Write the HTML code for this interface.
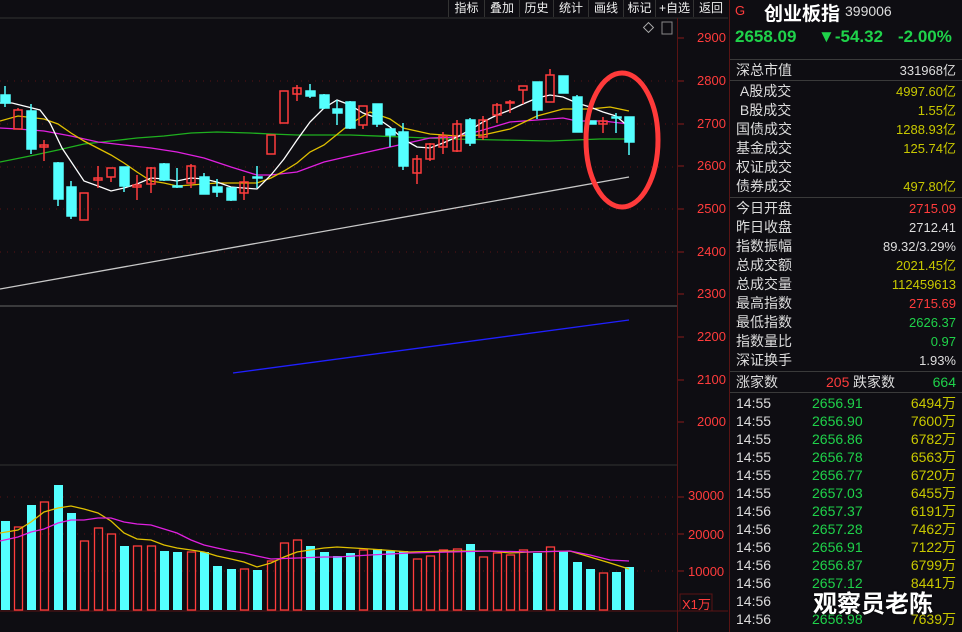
<!DOCTYPE html>
<html><head><meta charset="utf-8"><style>
*{margin:0;padding:0;box-sizing:border-box}
body{width:962px;height:632px;background:#0e0d12;overflow:hidden;position:relative;font-family:"Liberation Sans","Noto Sans CJK SC",sans-serif;color:#dcdcdc}
.tb{position:absolute;top:0;height:17px;font-size:12px;color:#eee;line-height:16px;text-align:center;border-left:1px solid #333}
.rp{position:absolute;left:729px;top:0;width:233px;height:632px;border-left:1px solid #5a1414}
.row{position:absolute;left:6px;right:6px;height:19px;font-size:14px;line-height:19px}
.row .v{position:absolute;right:0;top:0;font-size:13px}
.sep{position:absolute;left:0;right:0;height:1px;background:#3a3a3a}
.ax{position:absolute;left:697px;font-size:13px;color:#ff3c3c}
.tr{position:absolute;left:6px;right:6px;height:18px;font-size:14px;line-height:18px}
.tr span{position:absolute;top:0}
</style></head><body>
<div class="tb" style="left:448px;width:36px">指标</div>
<div class="tb" style="left:484px;width:35px">叠加</div>
<div class="tb" style="left:519px;width:34px">历史</div>
<div class="tb" style="left:553px;width:35px">统计</div>
<div class="tb" style="left:588px;width:35px">画线</div>
<div class="tb" style="left:623px;width:32px">标记</div>
<div class="tb" style="left:655px;width:38px">+自选</div>
<div class="tb" style="left:693px;width:35px">返回</div>
<svg width="730" height="632" style="position:absolute;left:0;top:0">
<line x1="0" y1="18" x2="728" y2="18" stroke="#333" />
<g stroke="#5a1414" stroke-dasharray="1,6" stroke-width="1">
<line x1="0" y1="81" x2="678" y2="81"/><line x1="0" y1="124" x2="678" y2="124"/><line x1="0" y1="167" x2="678" y2="167"/><line x1="0" y1="209" x2="678" y2="209"/><line x1="0" y1="252" x2="678" y2="252"/>
<line x1="0" y1="497" x2="678" y2="497"/><line x1="0" y1="534" x2="678" y2="534"/><line x1="0" y1="571" x2="678" y2="571"/>
</g>
<line x1="0" y1="306" x2="678" y2="306" stroke="#666"/>
<line x1="0" y1="465" x2="678" y2="465" stroke="#333"/>
<line x1="0" y1="611" x2="728" y2="611" stroke="#5a1414"/>
<line x1="677.5" y1="18" x2="677.5" y2="632" stroke="#5a1414"/>
<g stroke="#8a1a1a"><line x1="678" y1="38" x2="684" y2="38"/><line x1="678" y1="81" x2="684" y2="81"/><line x1="678" y1="124" x2="684" y2="124"/><line x1="678" y1="166" x2="684" y2="166"/><line x1="678" y1="209" x2="684" y2="209"/><line x1="678" y1="252" x2="684" y2="252"/><line x1="678" y1="294" x2="684" y2="294"/><line x1="678" y1="337" x2="684" y2="337"/><line x1="678" y1="380" x2="684" y2="380"/><line x1="678" y1="422" x2="684" y2="422"/><line x1="678" y1="497" x2="684" y2="497"/><line x1="678" y1="534" x2="684" y2="534"/><line x1="678" y1="571" x2="684" y2="571"/></g>
<rect x="645" y="24" width="7" height="7" fill="none" stroke="#aaa" transform="rotate(45 648.5 27.5)"/>
<rect x="662" y="22" width="10" height="12" fill="none" stroke="#888"/>
<rect x="680" y="594" width="32" height="17" fill="none" stroke="#5a1414"/>
<line x1="0" y1="289" x2="629" y2="177" stroke="#c8c8c8" stroke-width="1.3"/>
<line x1="233" y1="373" x2="629" y2="320" stroke="#2020ff" stroke-width="1.3"/>
<polyline fill="none" stroke="#1fb01f" stroke-width="1.3" points="0,162 30,156 58,150 84,144 111,141 137,138 164,136 191,133 217,132 250,133 271,134 297,135 324,135 350,135 403,137 450,139 500,140 550,141 600,139 629,139"/>
<polyline fill="none" stroke="#e020e0" stroke-width="1.3" points="0,128 18,129 44,131 71,136 98,142 124,145 151,148 177,152 204,158 231,167 257,175 271,175 297,172 324,162 350,156 390,147 430,138 457,137 483,130 510,122 537,120 563,118 577,121 603,121 629,124"/>
<polyline fill="none" stroke="#e0c000" stroke-width="1.3" points="0,121 18,116 44,119 58,124 71,133 84,141 111,155 124,163 137,172 151,181 164,183 177,186 191,185 217,183 257,183 271,178 284,171 297,163 310,152 324,145 350,124 370,112 390,119 403,128 430,134 457,136 483,135 510,129 537,116 563,109 590,109 610,107 629,111"/>
<polyline fill="none" stroke="#ffffff" stroke-width="1.3" points="0,103 12,103 40,110 50,123 62,148 84,181 98,186 111,191 124,188 137,184 151,178 164,179 177,181 191,178 204,179 217,182 231,187 257,189 271,175 284,159 297,140 310,122 324,108 337,100 350,105 363,113 377,118 390,127 403,139 417,147 430,148 443,143 457,137 470,130 483,122 497,115 510,110 523,104 537,98 550,95 563,97 577,103 590,107 603,112 616,116 629,127"/>
<g stroke-width="1.5">
<g stroke="#54ffff" fill="#54ffff">
<line x1="5" y1="86" x2="5" y2="107"/><rect x="1" y="95" width="9" height="8"/>
<line x1="31" y1="104" x2="31" y2="154"/><rect x="27" y="111" width="9" height="38"/>
<line x1="58" y1="162" x2="58" y2="206"/><rect x="54" y="163" width="9" height="36"/>
<line x1="71" y1="181" x2="71" y2="219"/><rect x="67" y="187" width="9" height="29"/>
<line x1="124" y1="167" x2="124" y2="192"/><rect x="120" y="167" width="9" height="19"/>
<line x1="164" y1="163" x2="164" y2="181"/><rect x="160" y="164" width="9" height="16"/>
<line x1="177" y1="168" x2="177" y2="188"/><rect x="173" y="186" width="9" height="1"/>
<line x1="204" y1="173" x2="204" y2="194"/><rect x="200" y="177" width="9" height="17"/>
<line x1="217" y1="179" x2="217" y2="197"/><rect x="213" y="187" width="9" height="5"/>
<line x1="231" y1="188" x2="231" y2="201"/><rect x="227" y="188" width="9" height="12"/>
<line x1="257" y1="166" x2="257" y2="188"/><rect x="253" y="177" width="9" height="1"/>
<line x1="310" y1="84" x2="310" y2="98"/><rect x="306" y="91" width="9" height="5"/>
<line x1="324" y1="94" x2="324" y2="109"/><rect x="320" y="95" width="9" height="13"/>
<line x1="337" y1="100" x2="337" y2="125"/><rect x="333" y="109" width="9" height="4"/>
<line x1="350" y1="101" x2="350" y2="129"/><rect x="346" y="102" width="9" height="26"/>
<line x1="377" y1="104" x2="377" y2="127"/><rect x="373" y="104" width="9" height="20"/>
<line x1="390" y1="129" x2="390" y2="147"/><rect x="386" y="129" width="9" height="6"/>
<line x1="403" y1="123" x2="403" y2="170"/><rect x="399" y="132" width="9" height="34"/>
<line x1="470" y1="118" x2="470" y2="146"/><rect x="466" y="120" width="9" height="23"/>
<line x1="537" y1="82" x2="537" y2="119"/><rect x="533" y="82" width="9" height="28"/>
<rect x="559" y="76" width="9" height="17"/>
<line x1="577" y1="95" x2="577" y2="132"/><rect x="573" y="97" width="9" height="35"/>
<rect x="588" y="121" width="8" height="3"/>
<line x1="616" y1="113" x2="616" y2="133"/><rect x="612" y="117" width="9" height="1"/>
<line x1="629" y1="117" x2="629" y2="155"/><rect x="625" y="117" width="9" height="25"/>
</g>
<g stroke="#ff3c3c" fill="none">
<line x1="18" y1="108" x2="18" y2="110"/><rect x="14" y="110" width="8" height="19"/>
<line x1="44" y1="140" x2="44" y2="161"/><rect x="40" y="145" width="8" height="2"/>
<rect x="80" y="193" width="8" height="27"/>
<line x1="98" y1="166" x2="98" y2="188"/><rect x="94" y="178" width="8" height="2"/>
<line x1="111" y1="177" x2="111" y2="182"/><rect x="107" y="168" width="8" height="9"/>
<line x1="137" y1="175" x2="137" y2="200"/><rect x="133" y="185" width="8" height="2"/>
<line x1="151" y1="167" x2="151" y2="193"/><rect x="147" y="168" width="8" height="16"/>
<line x1="191" y1="164" x2="191" y2="188"/><rect x="187" y="166" width="8" height="17"/>
<line x1="244" y1="176" x2="244" y2="200"/><rect x="240" y="182" width="8" height="11"/>
<rect x="267" y="135" width="8" height="19"/>
<rect x="280" y="91" width="8" height="32"/>
<line x1="297" y1="85" x2="297" y2="101"/><rect x="293" y="88" width="8" height="6"/>
<line x1="363" y1="125" x2="363" y2="129"/><rect x="359" y="106" width="8" height="19"/>
<line x1="417" y1="155" x2="417" y2="184"/><rect x="413" y="159" width="8" height="14"/>
<line x1="430" y1="143" x2="430" y2="161"/><rect x="426" y="144" width="8" height="15"/>
<line x1="443" y1="132" x2="443" y2="154"/><rect x="439" y="136" width="8" height="11"/>
<line x1="457" y1="120" x2="457" y2="152"/><rect x="453" y="124" width="8" height="27"/>
<line x1="483" y1="116" x2="483" y2="140"/><rect x="479" y="120" width="8" height="17"/>
<line x1="497" y1="103" x2="497" y2="123"/><rect x="493" y="105" width="8" height="10"/>
<line x1="510" y1="100" x2="510" y2="113"/><rect x="506" y="102" width="8" height="1"/>
<line x1="523" y1="90" x2="523" y2="104"/><rect x="519" y="86" width="8" height="4"/>
<line x1="550" y1="69" x2="550" y2="75"/><rect x="546" y="75" width="8" height="27"/>
<line x1="603" y1="117" x2="603" y2="133"/><rect x="599" y="121" width="8" height="3"/>
</g>
</g>
<ellipse cx="622" cy="140" rx="36" ry="67" fill="none" stroke="#ff3a3a" stroke-width="5"/>
<g fill="#54ffff">
<rect x="1" y="521" width="9" height="89"/><rect x="27" y="505" width="9" height="105"/><rect x="54" y="485" width="9" height="125"/><rect x="67" y="513" width="9" height="97"/><rect x="120" y="546" width="9" height="64"/><rect x="160" y="551" width="9" height="59"/><rect x="173" y="552" width="9" height="58"/><rect x="200" y="552" width="9" height="58"/><rect x="213" y="566" width="9" height="44"/><rect x="227" y="569" width="9" height="41"/><rect x="253" y="570" width="9" height="40"/><rect x="306" y="546" width="9" height="64"/><rect x="320" y="552" width="9" height="58"/>
<rect x="333" y="556" width="9" height="54"/><rect x="346" y="553" width="9" height="57"/><rect x="373" y="549" width="9" height="61"/><rect x="386" y="551" width="9" height="59"/><rect x="399" y="551" width="9" height="59"/><rect x="466" y="544" width="9" height="66"/><rect x="533" y="553" width="9" height="57"/><rect x="559" y="551" width="9" height="59"/><rect x="573" y="562" width="9" height="48"/><rect x="586" y="569" width="9" height="41"/><rect x="612" y="572" width="9" height="38"/><rect x="625" y="567" width="9" height="43"/>
</g>
<g fill="none" stroke="#ff3c3c" stroke-width="1.3">
<rect x="14.5" y="527" width="8" height="83"/><rect x="40.5" y="502" width="8" height="108"/><rect x="80.5" y="541" width="8" height="69"/><rect x="94.5" y="528" width="8" height="82"/><rect x="107.5" y="534" width="8" height="76"/><rect x="133.5" y="546" width="8" height="64"/><rect x="147.5" y="546" width="8" height="64"/><rect x="187.5" y="552" width="8" height="58"/><rect x="240.5" y="569" width="8" height="41"/><rect x="267.5" y="561" width="8" height="49"/><rect x="280.5" y="543" width="8" height="67"/><rect x="293.5" y="540" width="8" height="70"/>
<rect x="359.5" y="550" width="8" height="60"/><rect x="413.5" y="559" width="8" height="51"/><rect x="426.5" y="556" width="8" height="54"/><rect x="439.5" y="550" width="8" height="60"/><rect x="453.5" y="549" width="8" height="61"/><rect x="479.5" y="557" width="8" height="53"/><rect x="493.5" y="553" width="8" height="57"/><rect x="506.5" y="555" width="8" height="55"/><rect x="519.5" y="550" width="8" height="60"/><rect x="546.5" y="547" width="8" height="63"/><rect x="599.5" y="573" width="8" height="37"/>
</g>
<polyline fill="none" stroke="#e0c000" stroke-width="1.3" points="0,533 18,530 31,522 44,512 58,508 71,506 84,509 98,513 111,521 124,533 137,539 151,540 164,545 177,548 191,550 204,552 217,556 231,559 244,562 257,567 271,563 284,557 297,552 310,550 324,548 337,547 370,549 410,552 450,551 490,551 510,553 530,552 570,551 590,557 610,563 629,569"/>
<polyline fill="none" stroke="#e020e0" stroke-width="1.3" points="0,541 18,537 31,532 44,529 58,523 71,520 84,520 98,518 111,518 124,522 137,524 151,525 164,529 177,533 191,540 204,545 217,548 231,551 244,553 257,556 271,559 297,558 324,557 337,557 370,555 410,553 450,552 490,551 530,552 570,551 590,555 610,560 629,561"/>
</svg>
<div class="ax" style="top:30px">2900</div><div class="ax" style="top:73px">2800</div><div class="ax" style="top:116px">2700</div><div class="ax" style="top:158px">2600</div><div class="ax" style="top:201px">2500</div><div class="ax" style="top:244px">2400</div><div class="ax" style="top:286px">2300</div><div class="ax" style="top:329px">2200</div><div class="ax" style="top:372px">2100</div><div class="ax" style="top:414px">2000</div>
<div class="ax" style="top:488px;left:688px">30000</div><div class="ax" style="top:527px;left:688px">20000</div><div class="ax" style="top:564px;left:688px">10000</div>
<div class="ax" style="top:594px;left:682px;font-size:13px">X1万</div>
<div class="rp">
<div style="position:absolute;left:5px;top:3px;color:#ff3c3c;font-size:13px">G</div>
<div style="position:absolute;left:34px;top:-1px;color:#fff;font-size:19px;font-weight:bold">创业板指</div>
<div style="position:absolute;left:115px;top:3px;color:#ddd;font-size:14px">399006</div>
<div style="position:absolute;left:5px;top:27px;color:#1fd24a;font-size:17px;font-weight:bold">2658.09</div>
<div style="position:absolute;left:88px;top:27px;color:#1fd24a;font-size:17px;font-weight:bold">▼-54.32</div>
<div style="position:absolute;left:168px;top:27px;color:#1fd24a;font-size:17px;font-weight:bold">-2.00%</div>
<div class="sep" style="top:59px"></div>
<div class="row" style="top:61px">深总市值<span class="v" style="color:#ddd">331968亿</span></div>
<div class="sep" style="top:80px"></div>
<div class="row" style="top:82px">&nbsp;A股成交<span class="v" style="color:#c8c800">4997.60亿</span></div>
<div class="row" style="top:101px">&nbsp;B股成交<span class="v" style="color:#c8c800">1.55亿</span></div>
<div class="row" style="top:120px">国债成交<span class="v" style="color:#c8c800">1288.93亿</span></div>
<div class="row" style="top:139px">基金成交<span class="v" style="color:#c8c800">125.74亿</span></div>
<div class="row" style="top:158px">权证成交</div>
<div class="row" style="top:177px">债券成交<span class="v" style="color:#c8c800">497.80亿</span></div>
<div class="sep" style="top:197px"></div>
<div class="row" style="top:199px">今日开盘<span class="v" style="color:#ff3c3c">2715.09</span></div>
<div class="row" style="top:218px">昨日收盘<span class="v" style="color:#ddd">2712.41</span></div>
<div class="row" style="top:237px">指数振幅<span class="v" style="color:#ddd">89.32/3.29%</span></div>
<div class="row" style="top:256px">总成交额<span class="v" style="color:#c8c800">2021.45亿</span></div>
<div class="row" style="top:275px">总成交量<span class="v" style="color:#c8c800">112459613</span></div>
<div class="row" style="top:294px">最高指数<span class="v" style="color:#ff3c3c">2715.69</span></div>
<div class="row" style="top:313px">最低指数<span class="v" style="color:#1fd24a">2626.37</span></div>
<div class="row" style="top:332px">指数量比<span class="v" style="color:#1fd24a">0.97</span></div>
<div class="row" style="top:351px">深证换手<span class="v" style="color:#ddd">1.93%</span></div>
<div class="sep" style="top:371px"></div>
<div class="row" style="top:373px;font-size:14px">涨家数<span style="position:absolute;left:90px;color:#ff3c3c">205</span><span style="position:absolute;left:117px">跌家数</span><span class="v" style="color:#1fd24a;font-size:14px">664</span></div>
<div class="sep" style="top:392px"></div>
<div class="tr" style="top:394px"><span style="left:0">14:55</span><span style="left:76px;color:#1fd24a">2656.91</span><span style="right:0;color:#c8c800">6494万</span></div>
<div class="tr" style="top:412px"><span style="left:0">14:55</span><span style="left:76px;color:#1fd24a">2656.90</span><span style="right:0;color:#c8c800">7600万</span></div>
<div class="tr" style="top:430px"><span style="left:0">14:55</span><span style="left:76px;color:#1fd24a">2656.86</span><span style="right:0;color:#c8c800">6782万</span></div>
<div class="tr" style="top:448px"><span style="left:0">14:55</span><span style="left:76px;color:#1fd24a">2656.78</span><span style="right:0;color:#c8c800">6563万</span></div>
<div class="tr" style="top:466px"><span style="left:0">14:55</span><span style="left:76px;color:#1fd24a">2656.77</span><span style="right:0;color:#c8c800">6720万</span></div>
<div class="tr" style="top:484px"><span style="left:0">14:55</span><span style="left:76px;color:#1fd24a">2657.03</span><span style="right:0;color:#c8c800">6455万</span></div>
<div class="tr" style="top:502px"><span style="left:0">14:56</span><span style="left:76px;color:#1fd24a">2657.37</span><span style="right:0;color:#c8c800">6191万</span></div>
<div class="tr" style="top:520px"><span style="left:0">14:56</span><span style="left:76px;color:#1fd24a">2657.28</span><span style="right:0;color:#c8c800">7462万</span></div>
<div class="tr" style="top:538px"><span style="left:0">14:56</span><span style="left:76px;color:#1fd24a">2656.91</span><span style="right:0;color:#c8c800">7122万</span></div>
<div class="tr" style="top:556px"><span style="left:0">14:56</span><span style="left:76px;color:#1fd24a">2656.87</span><span style="right:0;color:#c8c800">6799万</span></div>
<div class="tr" style="top:574px"><span style="left:0">14:56</span><span style="left:76px;color:#1fd24a">2657.12</span><span style="right:0;color:#c8c800">8441万</span></div>
<div class="tr" style="top:592px"><span style="left:0">14:56</span></div>
<div class="tr" style="top:610px"><span style="left:0">14:56</span><span style="left:76px;color:#1fd24a">2656.98</span><span style="right:0;color:#c8c800">7639万</span></div>
<div style="position:absolute;left:83px;top:584px;color:#fff;font-size:24px;font-weight:bold;text-shadow:0 0 2px #000">观察员老陈</div>
</div>
</body></html>
